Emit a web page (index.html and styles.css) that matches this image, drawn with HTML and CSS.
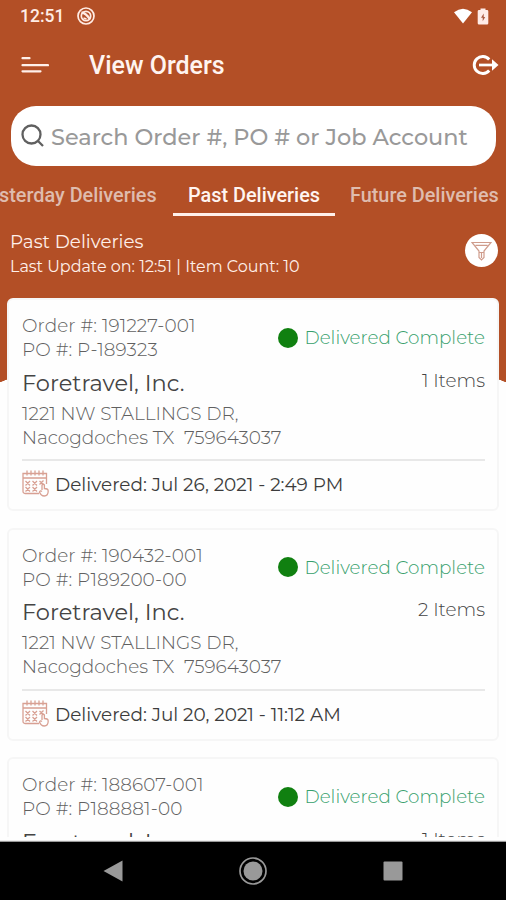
FILE: index.html
```html
<!DOCTYPE html>
<html lang="en">
<head>
<meta charset="utf-8">
<title>View Orders</title>
<link rel="stylesheet" href="styles.css">
</head>
<body>
<svg class="defs" width="0" height="0">
  <symbol id="calendar" viewBox="0 0 27 27">
    <g fill="none" stroke="#d8a093" stroke-width="1.300">
      <path d="M17 23.500H3a2 2 0 0 1-2-2V3.500h23.500V14M1 8h23.500M5 .5v5M9 .5v5M13 .5v5M17 .5v5M21 .5v5"/>
      <path d="M3.500 11l4.500 4.500M8 11l-4.500 4.500M10.500 11l4.500 4.500M15 11l-4.500 4.500M3.500 17l4.500 4.500M8 17l-4.500 4.500M10.500 17l4.500 4.500M15 17l-4.500 4.500M17.500 11l4 3.500M21.500 10.500l-4 4"/>
      <path d="M20 20v-5q1.200-1.500 2.400 0V18.500q3.800 0 3.800 2.500 0 5-4 5-3.200 0-4.700-4 .8-2 2.500-.5"/>
    </g>
  </symbol>
</svg>
<div class="screen">
  <header class="statusbar">
    <span class="clock">12:51</span>
    <svg class="dnd" width="18" height="18" viewBox="0 0 18 18" fill="none" stroke="#ffece4"><circle cx="9" cy="9" r="8" stroke-width="1.700"/><circle cx="9" cy="9" r="4.700" stroke-width="1.700"/><path d="M4.500 5.500Q9 6 13 12.500" stroke-width="2.300"/><path d="M6.500 11l3 1" stroke-width="1.500"/></svg>
    <svg class="wifi" width="20" height="16" viewBox="0 0 20 16"><path d="M1 4.300Q10-3 19 4.300L10 15.500z" fill="#fff"/></svg>
    <svg class="battery" width="12" height="17" viewBox="0 0 12 17"><path d="M3.500 2V.5h5V2H10q1.300 0 1.300 1.300v12q0 1.200-1.300 1.200H2Q.7 16.500.7 15.300v-12Q.7 2 2 2z" fill="#ffece8"/><path d="M6.700 5.500L4 9.700h1.700v3.500L8.200 9H6.700z" fill="#a85a42"/></svg>
  </header>
  <div class="appbar">
    <svg class="menu" width="28" height="18" viewBox="0 0 28 18" stroke="#fff0ea" stroke-width="2.200" stroke-linecap="round"><path d="M1.500 2.200h7M1.500 9.200h25.500M1.500 15.300h18"/></svg>
    <h1>View Orders</h1>
    <svg class="logout" width="28" height="22" viewBox="0 0 28 22"><path d="M18.200 5.500A8.500 8.500 0 1 0 18.200 16.500" fill="none" stroke="#fff" stroke-width="2.900"/><path d="M8 11h14" stroke="#fff" stroke-width="2.700"/><path d="M21 5.300L27.500 11 21 16.700z" fill="#fff"/></svg>
  </div>
  <div class="search">
    <svg width="24" height="24" viewBox="0 0 24 24" fill="none" stroke="#606060" stroke-width="2.300"><circle cx="10.500" cy="10.500" r="9"/><path d="M17 17l5 5"/></svg>
    <span>Search Order #, PO # or Job Account</span>
  </div>
  <nav class="tabs">
    <span class="tab yesterday">sterday Deliveries</span>
    <span class="tab active">Past Deliveries</span>
    <span class="tab future">Future Deliveries</span>
  </nav>
  <div class="summary">
    <div>
      <div class="heading">Past Deliveries</div>
      <div class="updated">Last Update on: 12:51 | Item Count: 10</div>
    </div>
    <span class="filter"><svg width="21" height="20" viewBox="0 0 21 20" fill="none" stroke="#cf9c8c" stroke-width="1.200"><path d="M1 1.500h19L13 10v6.500L10.500 19 8 16.500V10zM4.500 4.300h12M8.500 11.500H13M10.500 12v5"/></svg></span>
  </div>
  <main class="orders">
    <article class="card">
      <div class="top"><div class="ids"><div>Order #: 191227-001</div><div>PO #: P-189323</div></div><div class="state"><i></i><span>Delivered Complete</span></div></div>
      <div class="customer"><span class="name">Foretravel, Inc.</span><span class="items">1 Items</span></div>
      <div class="address"><div>1221 NW STALLINGS DR,</div><div>Nacogdoches TX&nbsp; 759643037</div></div>
      <div class="date"><svg width="27" height="27"><use href="#calendar"/></svg><span>Delivered: Jul 26, 2021 - 2:49 PM</span></div>
    </article>
    <article class="card">
      <div class="top"><div class="ids"><div>Order #: 190432-001</div><div>PO #: P189200-00</div></div><div class="state"><i></i><span>Delivered Complete</span></div></div>
      <div class="customer"><span class="name">Foretravel, Inc.</span><span class="items">2 Items</span></div>
      <div class="address"><div>1221 NW STALLINGS DR,</div><div>Nacogdoches TX&nbsp; 759643037</div></div>
      <div class="date"><svg width="27" height="27"><use href="#calendar"/></svg><span>Delivered: Jul 20, 2021 - 11:12 AM</span></div>
    </article>
    <article class="card">
      <div class="top"><div class="ids"><div>Order #: 188607-001</div><div>PO #: P188881-00</div></div><div class="state"><i></i><span>Delivered Complete</span></div></div>
      <div class="customer"><span class="name">Foretravel, Inc.</span><span class="items">1 Items</span></div>
    </article>
  </main>
  <footer class="navbar">
    <svg width="20" height="22" viewBox="0 0 20 22"><path d="M19.500.5v21L.5 11z" fill="#999"/></svg>
    <svg width="30" height="30" viewBox="0 0 30 30"><circle cx="15" cy="15" r="13" fill="none" stroke="#999" stroke-width="1.700"/><circle cx="15" cy="15" r="9.500" fill="#999"/></svg>
    <svg width="20" height="20" viewBox="0 0 20 20"><rect x=".5" y=".5" width="19" height="19" rx="1" fill="#999"/></svg>
  </footer>
</div>
</body>
</html>
```
FILE: styles.css
```css
* { box-sizing: border-box; }
body { margin: 0; }
.defs { display: block; }
svg { flex: none; }
.screen {
  width: 506px; height: 900px; overflow: hidden;
  display: flex; flex-direction: column;
  background:
    radial-gradient(ellipse 300px 80px at 253px 425px, #fefefe 99.5%, transparent 100%),
    linear-gradient(#b34f26 382px, #fefefe 382px);
  font-family: Montserrat, Inter, sans-serif;
  white-space: nowrap;
}
.statusbar { height: 32px; display: flex; align-items: center; padding: 0 17px 0 20px; flex: none; }
.clock { font: 500 17.500px/32px Roboto, sans-serif; color: #ffece4; width: 57px; }
.wifi { margin-left: auto; margin-right: 4px; }
.appbar { height: 74px; padding: 0 7px 8px 21px; display: flex; align-items: center; flex: none; }
h1 { margin: 2px 0 0 40px; font: 500 25px/32px Roboto, sans-serif; color: #fff4f0; }
.logout { margin-left: auto; }
.search { flex: none; margin: 0 10px 0 11px; height: 60px; border-radius: 25px; background: #fff; display: flex; align-items: center; padding-left: 10px; gap: 6px; color: #999; font-size: 22.400px; font-weight: 500; }
.search span { padding-top: 1px; }
.tabs { flex: none; height: 51px; display: flex; font: 500 19.850px/24px Roboto, sans-serif; color: #dfbcae; }
.tab { padding-top: 18px; height: 50px; }
.yesterday { width: 173px; text-indent: -1px; }
.active { width: 162px; text-align: center; color: #fff4f0; border-bottom: 3px solid #fff0ea; }
.future { margin-left: 15px; }
.summary { flex: none; height: 81px; padding: 12px 8px 0 10px; display: flex; justify-content: space-between; color: #fff0ea; }
.heading { font-size: 18.300px; line-height: 25px; }
.updated { font-size: 15.950px; line-height: 25px; }
.filter { width: 33px; height: 33px; margin-top: 5px; border-radius: 50%; background: #fff; display: flex; align-items: center; justify-content: center; }
.orders { flex: none; height: 539px; overflow: hidden; padding: 0 7px; display: flex; flex-direction: column; gap: 16.500px; }
.card { flex: none; height: 213px; border: 2px solid #f6f6f6; border-radius: 6px; padding: 14px 12px 0 13px; background: #fefefe; color: #606060; font-size: 18.450px; line-height: 24.250px; font-weight: 300; }
.top, .customer, .date, .state { display: flex; align-items: center; }
.top { justify-content: space-between; }
.ids { letter-spacing: .1px; }
.state { color: #36a06c; gap: 7px; font-size: 18.350px; }
.state i { width: 20px; height: 20px; border-radius: 50%; background: #108010; margin-top: -1px; }
.customer { justify-content: space-between; margin-top: 8px; height: 25px; color: #444; }
.name { font-size: 22.500px; font-weight: 400; }
.items { margin-top: -4px; }
.address { margin-top: 6px; height: 59.500px; border-bottom: 2px solid #e8e8e8; }
.date { margin-top: 11px; height: 27px; gap: 6px; color: #3c3c3c; font-weight: 400; }
.date svg { margin-top: -4px; }
.navbar { flex: none; margin-top: 5px; height: 58px; padding: 0 103px; background: #000; box-shadow: 0 -1px 1px #999; display: flex; align-items: center; justify-content: space-between; }
```
